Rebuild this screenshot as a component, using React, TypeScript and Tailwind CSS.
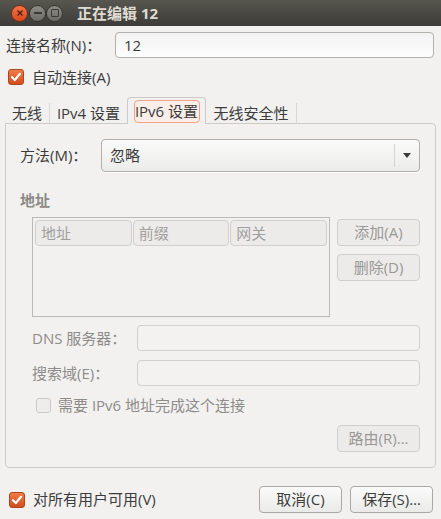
import React from "react";

const font = {
  fontFamily: '"Open Sans", "Noto Sans CJK SC", sans-serif',
};

function Check({ className = "" }: { className?: string }) {
  return (
    <span
      className={`flex h-[16px] w-[16px] items-center justify-center rounded-[3px] border border-[#b2441b] bg-gradient-to-b from-[#f07a48] to-[#d24e1d] ${className}`}
    >
      <svg width="12" height="12" viewBox="0 0 12 12">
        <path
          d="M2 6.2 L4.8 9 L10 2.8"
          fill="none"
          stroke="#fff"
          strokeWidth="2.2"
          strokeLinecap="round"
          strokeLinejoin="round"
        />
      </svg>
    </span>
  );
}

function Btn({
  children,
  disabled,
  className = "",
}: {
  children: React.ReactNode;
  disabled?: boolean;
  className?: string;
}) {
  return (
    <div
      className={
        disabled
          ? `flex h-[27px] w-[83px] items-center justify-center rounded-[4px] border border-[#d0ceca] bg-[#ecebea] text-[#9a9895] ${className}`
          : `flex h-[27px] w-[83px] items-center justify-center rounded-[4px] border border-[#aaa8a4] bg-gradient-to-b from-[#fbfbfb] to-[#eaeae9] text-[#3c3c3c] ${className}`
      }
    >
      {children}
    </div>
  );
}

export default function App() {
  return (
    <div
      className="flex h-[519px] w-[441px] flex-col bg-[#f2f1f0] text-[15px] leading-none text-[#3c3c3c]"
      style={font}
    >
      {/* title bar */}
      <div className="flex h-[26px] items-center bg-gradient-to-b from-[#57564f] to-[#3c3b37] pl-[11px]">
        <span className="flex h-[17px] w-[17px] items-center justify-center rounded-full border border-[#7a2d14] bg-gradient-to-b from-[#f47247] to-[#d74a1d]">
          <svg width="8" height="8" viewBox="0 0 8 8">
            <path d="M1.5 1.5 L6.5 6.5 M6.5 1.5 L1.5 6.5" stroke="#4a1a0b" strokeWidth="1.3" />
          </svg>
        </span>
        <span className="ml-[1px] flex h-[17px] w-[17px] items-center justify-center rounded-full border border-[#35342f] bg-gradient-to-b from-[#8c8b85] to-[#6c6b66]">
          <span className="h-[1.5px] w-[8px] bg-[#3a3935]" />
        </span>
        <span className="ml-[0px] flex h-[17px] w-[17px] items-center justify-center rounded-full border border-[#35342f] bg-gradient-to-b from-[#8c8b85] to-[#6c6b66]">
          <span className="h-[8px] w-[8px] rounded-[1px] border-[1.3px] border-[#3a3935]" />
        </span>
        <span className="ml-[14px] text-[15px] font-bold text-[#dfdbd2]">正在编辑 12</span>
      </div>

      {/* name row */}
      <div className="mt-[6px] flex h-[26px] items-center pl-[6px] pr-[7px]">
        <span className="w-[109px]">连接名称(N)：</span>
        <div className="flex h-[26px] flex-1 items-center rounded-[4px] border border-[#b3b1ad] bg-gradient-to-b from-[#f3f3f3] to-[#fdfdfd] pl-[8px]">
          12
        </div>
      </div>

      {/* auto connect */}
      <div className="mt-[11px] flex h-[16px] items-center pl-[8px]">
        <Check />
        <span className="ml-[8px]">自动连接(A)</span>
      </div>

      {/* tabs */}
      <div className="mt-[12px] flex h-[26px] items-end px-[5px]">
        <div className="flex h-[20px] w-[45px] items-center justify-center border-r border-[#dad8d5]">
          无线
        </div>
        <div className="flex h-[20px] w-[77px] items-center justify-center">IPv4 设置</div>
        <div className="relative z-10 -mb-px flex h-[27px] w-[79px] items-center justify-center rounded-t-[4px] border border-b-0 border-[#cdcbc8] bg-[#f2f1f0]">
          <span className="flex h-[23px] w-[66px] items-center justify-center rounded-[4px] border border-[#f2a385] bg-[#fbeee8]">
            IPv6 设置
          </span>
        </div>
        <div className="flex h-[20px] w-[91px] items-center justify-center border-r border-[#dad8d5]">
          无线安全性
        </div>
      </div>

      {/* panel */}
      <div className="mx-[5px] flex h-[345px] flex-col rounded-b-[4px] rounded-tr-[4px] border border-[#cdcbc8] pl-[14px] pr-[15px]">
        <div className="mt-[15px] flex h-[33px] items-center">
          <span className="w-[81px]">方法(M)：</span>
          <div className="flex h-[33px] flex-1 items-center rounded-[4px] border border-[#b1afab] bg-gradient-to-b from-[#fafafa] to-[#ececeb] shadow-[0_1px_0_rgba(255,255,255,0.8)]">
            <span className="flex-1 pl-[8px]">忽略</span>
            <span className="h-[23px] w-px bg-[#d6d4d1]" />
            <span className="flex w-[24px] justify-center">
              <svg width="8" height="5" viewBox="0 0 8 5">
                <path d="M0 0 H8 L4 5 Z" fill="#3c3c3c" />
              </svg>
            </span>
          </div>
        </div>

        <div className="mt-[21px] font-bold text-[#8c8a87]">地址</div>

        <div className="mt-[9px] flex pl-[12px]">
          <div className="h-[100px] w-[298px] border border-[#bcbab6] p-[2px]">
            <div className="flex gap-[1px] text-[#a19f9c]">
              <div className="flex h-[26px] flex-1 items-center rounded-[4px] border border-[#d2d0cd] bg-[#ecebea] pl-[5px]">
                地址
              </div>
              <div className="flex h-[26px] flex-1 items-center rounded-[4px] border border-[#d2d0cd] bg-[#ecebea] pl-[5px]">
                前缀
              </div>
              <div className="flex h-[26px] flex-1 items-center rounded-[4px] border border-[#d2d0cd] bg-[#ecebea] pl-[5px]">
                网关
              </div>
            </div>
          </div>
          <div className="ml-auto flex flex-col gap-[8px] pt-[2px]">
            <Btn disabled>添加(A)</Btn>
            <Btn disabled>删除(D)</Btn>
          </div>
        </div>

        <div className="mt-[8px] flex h-[26px] items-center pl-[12px] text-[#8e8c89]">
          <span className="w-[105px]">DNS 服务器：</span>
          <div className="h-[26px] flex-1 rounded-[4px] border border-[#d2d0cd] bg-[#f3f2f1]" />
        </div>
        <div className="mt-[9px] flex h-[26px] items-center pl-[12px] text-[#8e8c89]">
          <span className="w-[105px]">搜索域(E)：</span>
          <div className="h-[26px] flex-1 rounded-[4px] border border-[#d2d0cd] bg-[#f3f2f1]" />
        </div>

        <div className="mt-[12px] flex h-[15px] items-center pl-[16px] text-[#8e8c89]">
          <span className="h-[15px] w-[15px] rounded-[3px] border border-[#cbc9c6] bg-[#eeedec]" />
          <span className="ml-[7px]">需要 IPv6 地址完成这个连接</span>
        </div>

        <div className="mt-[12px] flex justify-end">
          <Btn disabled>路由(R)…</Btn>
        </div>
      </div>

      {/* bottom */}
      <div className="mt-[18px] flex items-center pl-[9px] pr-[8px]">
        <Check />
        <span className="ml-[8px]">对所有用户可用(V)</span>
        <Btn className="ml-auto">取消(C)</Btn>
        <Btn className="ml-[8px]">保存(S)…</Btn>
      </div>
    </div>
  );
}
